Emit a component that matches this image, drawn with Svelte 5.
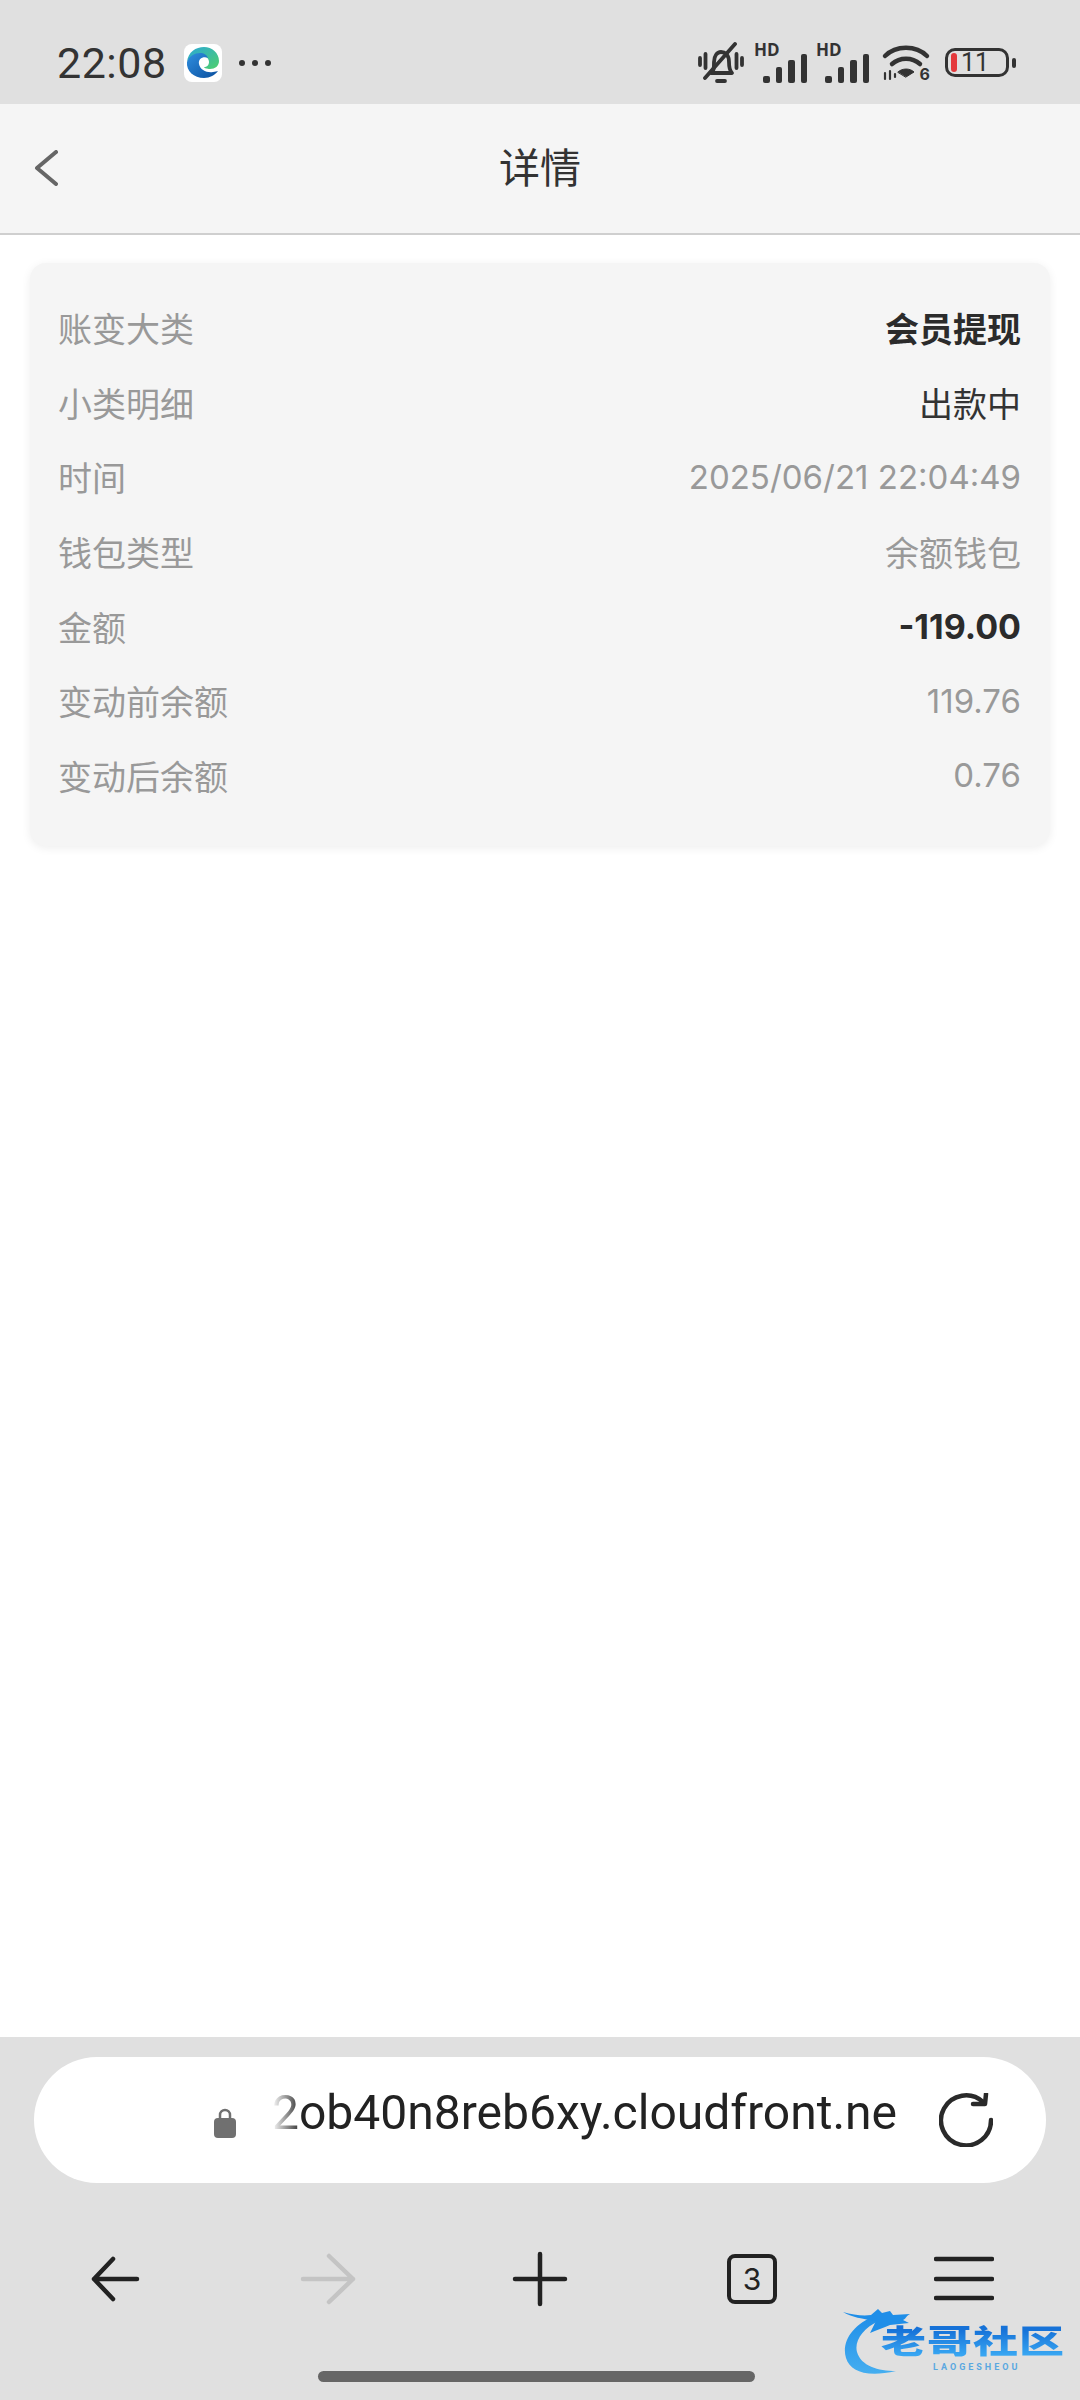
<script lang="ts">
	const rows = [
		{ label: '账变大类', value: '会员提现', kind: 'strong' },
		{ label: '小类明细', value: '出款中', kind: 'dark' },
		{ label: '时间', value: '2025/06/21 22:04:49', kind: 'num' },
		{ label: '钱包类型', value: '余额钱包', kind: '' },
		{ label: '金额', value: '-119.00', kind: 'strong' },
		{ label: '变动前余额', value: '119.76', kind: 'num' },
		{ label: '变动后余额', value: '0.76', kind: 'num' }
	]
</script>

<div class="phone">
	<header class="status">
		<span class="time">22:08</span>
		<svg class="edge" viewBox="0 0 38 38" width="38" height="38">
			<defs>
				<linearGradient id="edgeTop" x1="0" y1="0" x2="1" y2="1">
					<stop offset="0" stop-color="#2aa7d8" />
					<stop offset="1" stop-color="#4fd06c" />
				</linearGradient>
				<linearGradient id="edgeLow" x1="0" y1="0" x2="1" y2="1">
					<stop offset="0" stop-color="#2f8fe0" />
					<stop offset="1" stop-color="#0b4f9e" />
				</linearGradient>
			</defs>
			<rect width="38" height="38" rx="8" fill="#fff" />
			<path d="M3 18C4 8 12 3 20 3c8 0 15 6 15 14 0 5-4 8-9 8-3 0-6-1-6-2 3 0 5-2 5-5 0-4-4-7-9-7-6 0-11 3-13 7z" fill="url(#edgeTop)" />
			<path d="M3 18c2-6 8-9 13-9 4 0 7 2 8 5-5-2-10 1-9 6 1 6 8 9 14 8 2 0 4-1 5-1-3 4-8 7-14 7C10 34 2 27 3 18z" fill="url(#edgeLow)" />
		</svg>
		<span class="dots"><i></i><i></i><i></i></span>
		<div class="status-right">
			<svg viewBox="0 0 46 42" width="46" height="42" fill="none" stroke="#333" stroke-width="3.800" stroke-linecap="round" stroke-linejoin="round">
				<path d="M2 16v7M7.500 12v14M38.500 12v14M44 16v7" />
				<path d="M13 31c3-2 3-5 3-11 0-6 3-10 7-10s8 3 8 10c0 6 1 9 3 11z" />
				<path d="M7 36 37 2" />
				<path d="M19 39h8" />
			</svg>
			<div class="signal">
				<span class="hd">HD</span>
				<span class="bar b1"></span><span class="bar b2"></span><span class="bar b3"></span><span class="bar b4"></span>
			</div>
			<div class="signal second">
				<span class="hd">HD</span>
				<span class="bar b1"></span><span class="bar b2"></span><span class="bar b3"></span><span class="bar b4"></span>
			</div>
			<div class="wifi">
				<svg viewBox="0 0 50 36" width="50" height="36" fill="none" stroke="#333" stroke-width="4.500" stroke-linecap="round">
					<path d="M4 11C15 0 35 0 46 11" />
					<path d="M11 19c8-7 20-7 28 0" />
					<path d="M17 27c4-4 12-4 16 0l-8 5z" fill="#333" stroke-width="1" />
					<path d="M4 28v6M9 26v8M14 29v3" stroke-width="2.200" />
				</svg>
				<span class="wifi-six">6</span>
			</div>
			<div class="battery">
				<span class="level"></span>
				<span class="pct">11</span>
			</div>
			<span class="nub"></span>
		</div>
	</header>

	<nav class="title-bar">
		<svg class="back" viewBox="0 0 24 36" width="24" height="36" fill="none" stroke="#666" stroke-width="4" stroke-linecap="round" stroke-linejoin="round">
			<path d="M22 2 3 18l19 16" />
		</svg>
		<h1>详情</h1>
	</nav>

	<main class="content">
		<section class="card">
			{#each rows as row}
				<div class="row">
					<span class="label">{row.label}</span>
					<span class="value {row.kind}">{row.value}</span>
				</div>
			{/each}
		</section>
	</main>

	<footer class="browser">
		<div class="url-pill">
			<svg class="lock" viewBox="0 0 24 30" width="24" height="30">
				<path d="M7 12V7a5 5 0 0 1 10 0v5" fill="none" stroke="#707070" stroke-width="2.500" />
				<rect x="1" y="10" width="22" height="20" rx="4" fill="#707070" />
			</svg>
			<div class="url"><span>2ob40n8reb6xy.cloudfront.ne</span></div>
			<svg class="reload" viewBox="0 0 54 54" width="54" height="54" fill="none" stroke="#2a2a2a" stroke-width="4.500" stroke-linecap="round" stroke-linejoin="round">
				<path d="M44 9A25 25 0 1 0 52 27" />
				<path d="M34 11 46 11 47 1" />
			</svg>
		</div>
		<div class="tools">
			<svg viewBox="0 0 60 60" width="60" height="60" fill="none" stroke="#222" stroke-width="4.500" stroke-linecap="round" stroke-linejoin="round">
				<path d="M8 30h43M27 10 8 30l19 20" />
			</svg>
			<svg viewBox="0 0 60 60" width="60" height="60" fill="none" stroke="#c4c4c4" stroke-width="4.500" stroke-linecap="round" stroke-linejoin="round">
				<path d="M5 30h50M31 7l24 23-24 23" />
			</svg>
			<svg viewBox="0 0 60 60" width="60" height="60" fill="none" stroke="#222" stroke-width="4.500" stroke-linecap="round">
				<path d="M5 30h50M30 5v50" />
			</svg>
			<div class="tabs">3</div>
			<svg viewBox="0 0 60 60" width="60" height="60" fill="none" stroke="#222" stroke-width="4.500" stroke-linecap="round">
				<path d="M2 10h56M2 30h56M2 49h56" />
			</svg>
		</div>
		<div class="home"></div>
		<div class="watermark">
			<svg viewBox="0 0 100 72" width="100" height="72">
				<defs>
					<linearGradient id="dragon" x1="0" y1="0" x2="0" y2="1">
						<stop offset="0" stop-color="#1f8ee8" />
						<stop offset="1" stop-color="#45aef0" />
					</linearGradient>
				</defs>
				<path d="M32 8C10 16-2 34 3 50c4 13 20 20 50 13C35 63 18 58 14 44 11 33 20 20 36 13z" fill="url(#dragon)" />
				<path d="M0 4c10 3 20 4 28 3l7-6 4 4 8-2 3 4 17-1c-5 3-4 5-7 6l6 3-19 2c-6 3-14 5-20 8l6-12C20 11 8 9 0 4z" fill="#1f8ee8" />
			</svg>
			<div class="mark-text">
				<b>老哥社区</b>
				<small>LAOGESHEOU</small>
			</div>
		</div>
	</footer>
</div>

<style>
	:global(body) {
		margin: 0;
		background: #fff;
	}

	.phone {
		position: relative;
		display: flex;
		flex-direction: column;
		width: 1080px;
		height: 2400px;
		overflow: hidden;
		font-family: Roboto, 'Noto Sans CJK SC', sans-serif;
	}

	.status {
		display: flex;
		align-items: center;
		height: 104px;
		padding: 21px 64px 0 57px;
		box-sizing: border-box;
		flex: none;
		background: #e0e0e0;
		color: #333;
	}

	.time {
		font-size: 43px;
		letter-spacing: 0.5px;
	}

	.edge {
		margin-left: 17px;
	}

	.dots {
		display: flex;
		gap: 7px;
		margin-left: 17px;
	}

	.dots i {
		width: 6px;
		height: 6px;
		border-radius: 50%;
		background: #333;
	}

	.status-right {
		display: flex;
		align-items: center;
		margin-left: auto;
	}

	.signal {
		display: flex;
		align-items: flex-end;
		justify-content: flex-end;
		gap: 6px;
		position: relative;
		width: 53px;
		height: 40px;
		margin-left: 10px;
		box-sizing: border-box;
	}

	.signal.second {
		margin-left: 9px;
	}

	.hd {
		position: absolute;
		left: 0;
		top: -2px;
		font: 700 17px/18px 'Open Sans', sans-serif;
		color: #333;
	}

	.bar {
		width: 6.500px;
		background: #333;
		border-radius: 2px;
	}

	.b1 { height: 7px; }
	.b2 { height: 16px; }
	.b3 { height: 23px; }
	.b4 { height: 29px; }

	.wifi {
		position: relative;
		width: 50px;
		height: 36px;
		margin-left: 12px;
	}

	.wifi svg {
		display: block;
	}

	.wifi-six {
		position: absolute;
		right: 1px;
		bottom: 0;
		font: 700 16px/14px Inter, sans-serif;
		color: #333;
	}

	.battery {
		position: relative;
		display: flex;
		align-items: center;
		justify-content: center;
		width: 64px;
		height: 29px;
		margin-left: 14px;
		border: 3px solid #333;
		border-radius: 10px;
		box-sizing: border-box;
	}

	.level {
		position: absolute;
		left: 3px;
		top: 2px;
		bottom: 2px;
		width: 6px;
		border-radius: 3px;
		background: #e4393c;
	}

	.pct {
		font-size: 25px;
		line-height: 1;
		color: #333;
		margin-left: -4px;
	}

	.nub {
		width: 4px;
		height: 10px;
		margin-left: 3px;
		border-radius: 2px;
		background: #333;
	}

	.title-bar {
		position: relative;
		display: flex;
		align-items: center;
		justify-content: center;
		height: 129px;
		flex: none;
		background: #f5f5f5;
		border-bottom: 2px solid #cfcfcf;
	}

	.back {
		position: absolute;
		left: 34px;
		top: 46px;
	}

	h1 {
		margin: -7px 0 0;
		font-size: 41px;
		font-weight: 400;
		color: #333;
	}

	.content {
		flex: 1;
		padding: 28px 30px 0;
		background: #fff;
	}

	.card {
		padding: 27px 29px 33px 28px;
		border-radius: 16px;
		background: #f5f5f5;
		box-shadow: 0 2px 10px rgba(0, 0, 0, 0.07);
	}

	.row {
		display: flex;
		align-items: center;
		justify-content: space-between;
		height: 74.7px;
		font-size: 34px;
		color: #999;
	}

	.value {
		font-family: Inter, 'Noto Sans CJK SC', sans-serif;
		font-size: 34px;
	}

	.value.num {
		font-size: 33px;
	}

	.value.dark {
		color: #333;
	}

	.value.strong {
		color: #2b2b2b;
		font-weight: 700;
	}

	.browser {
		position: relative;
		flex: none;
		height: 363px;
		padding: 20px 34px 0;
		box-sizing: border-box;
		background: #e0e0e0;
	}

	.url-pill {
		display: flex;
		align-items: center;
		height: 126px;
		padding: 0 53px 0 179px;
		border-radius: 63px;
		background: #fff;
	}

	.lock {
		flex: none;
		margin-top: 6px;
	}

	.url {
		width: 626px;
		margin-left: 35px;
		overflow: hidden;
		white-space: nowrap;
		font-size: 48px;
		color: #222;
		-webkit-mask-image: linear-gradient(to right, transparent 0, #000 30px);
		mask-image: linear-gradient(to right, transparent 0, #000 30px);
		margin-top: -16px;
	}

	.reload {
		flex: none;
		margin-left: auto;
	}

	.tools {
		display: flex;
		align-items: center;
		justify-content: space-between;
		height: 60px;
		margin: 66px 52px 0;
	}

	.tabs {
		display: flex;
		align-items: center;
		justify-content: center;
		width: 50px;
		height: 50px;
		margin: 0 5px;
		box-sizing: border-box;
		border: 4px solid #222;
		border-radius: 8px;
		font-size: 30px;
		font-family: Inter, sans-serif;
		color: #222;
	}

	.home {
		width: 437px;
		height: 11px;
		margin: 62px 0 0 284px;
		border-radius: 6px;
		background: #666;
	}

	.watermark {
		position: absolute;
		left: 843px;
		top: 271px;
		display: flex;
		width: 225px;
		height: 72px;
	}

	.mark-text {
		position: absolute;
		left: 38px;
		top: 7px;
		display: flex;
		flex-direction: column;
		align-items: flex-start;
	}

	.mark-text b {
		display: block;
		height: 53px;
		font-size: 45px;
		font-weight: 900;
		line-height: 53px;
		letter-spacing: 1px;
		white-space: nowrap;
		color: transparent;
		background: linear-gradient(to bottom, #1672d8 20%, #38a6f2 85%);
		-webkit-background-clip: text;
		background-clip: text;
		transform: scaleY(0.72);
	}

	.mark-text small {
		margin: -6px 0 0 52px;
		font-size: 9px;
		line-height: 10px;
		font-weight: 700;
		letter-spacing: 3px;
		color: #5aa8e0;
	}
</style>
